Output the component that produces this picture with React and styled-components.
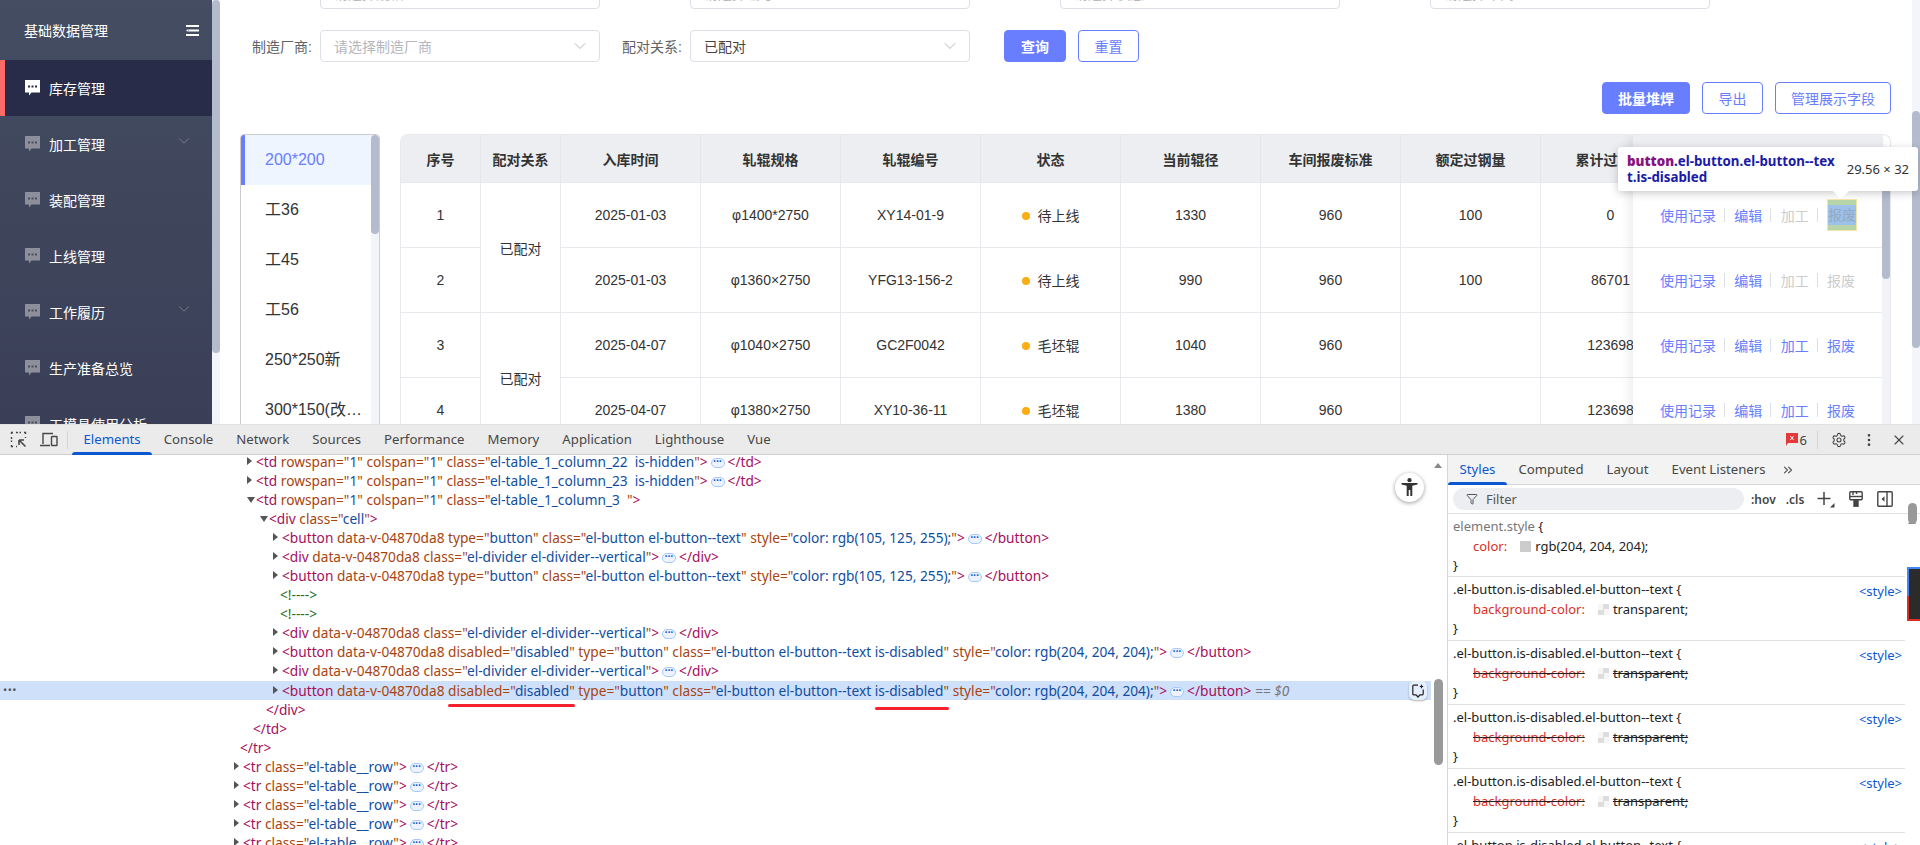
import React from 'react'
import styled, { createGlobalStyle } from 'styled-components'
import { ChevronDown, ChevronsRight, Filter as FilterIcon, MoreVertical, Settings, X } from 'lucide-react'

const APP_FONT = `"Liberation Sans", "Noto Sans CJK SC", sans-serif`
const TOOL_FONT = `"Noto Sans", "Noto Sans CJK SC", sans-serif`
const BRAND = '#697dff'

const GlobalStyle = createGlobalStyle`
  html, body { margin: 0; padding: 0; height: 100%; overflow: hidden; background: #fff; }
  * { box-sizing: border-box; }
`

const Page = styled.div`
  width: 1920px;
  height: 845px;
  display: flex;
  flex-direction: column;
  overflow: hidden;
`

const Viewport = styled.div`
  position: relative;
  height: 424px;
  display: flex;
  overflow: hidden;
  font-family: ${APP_FONT};
`

/* ---------- sidebar ---------- */
const Sidebar = styled.aside`
  width: 212px;
  flex: none;
  height: 424px;
  color: #fff;
  font-size: 14px;
  background: linear-gradient(#444d61, #3a3f57);
`

const SideHead = styled.div`
  height: 60px;
  padding: 0 13px 0 24px;
  display: flex;
  align-items: center;
  justify-content: space-between;
`

const SideItem = styled.div`
  height: 56px;
  display: flex;
  align-items: center;
  gap: 9px;
  padding-left: ${(p) => (p.$active ? '20px' : '25px')};
  padding-right: 19px;
  border-left: ${(p) => (p.$active ? '5px solid #fb6a66' : 'none')};
  background: ${(p) => (p.$active ? '#282c48' : 'transparent')};
  & > span { flex: 1; }
  & > .arrow { color: #868b9b; margin-top: -6px; }
`

const Rail = styled.div`
  width: ${(p) => p.$w || 8}px;
  flex: none;
  background: #f3f5fa;
  position: relative;
`

const RailThumb = styled.div`
  height: ${(p) => p.$h}px;
  margin-top: ${(p) => p.$top || 0}px;
  background: #b4bbcd;
  border-radius: 4px;
`

/* ---------- main ---------- */
const Main = styled.main`
  flex: 1;
  min-width: 0;
  background: #fff;
  padding: 0 21px 0 20px;
`

const FilterForm = styled.div`
  display: grid;
  grid-template-columns: repeat(4, 370px);
  row-gap: 21px;
  margin: -23px 0 0 -20px;
`

const FormItem = styled.div`
  display: flex;
  align-items: center;
  height: 32px;
  font-size: 14px;
  color: #606266;
`

const FormLabel = styled.label`
  width: 100px;
  flex: none;
  padding-right: 8px;
  text-align: right;
`

const SelectBox = styled.div`
  width: 280px;
  height: 32px;
  flex: none;
  display: flex;
  align-items: center;
  justify-content: space-between;
  padding: 0 9px 0 13px;
  border: 1px solid #dcdfe6;
  border-radius: 4px;
  background: #fff;
  color: ${(p) => (p.$placeholder ? '#b4b7bd' : '#444')};
  & svg { color: #a8abb2; margin-top: -1px; }
`

const Btn = styled.button`
  height: 32px;
  padding: 0;
  width: ${(p) => p.$w}px;
  flex: none;
  font: 14px ${APP_FONT};
  border-radius: 4px;
  border: 1px solid ${BRAND};
  background: ${(p) => (p.$primary ? BRAND : '#fff')};
  color: ${(p) => (p.$primary ? '#fff' : BRAND)};
  font-weight: ${(p) => (p.$primary ? 700 : 400)};
`

const FormActions = styled.div`
  display: flex;
  gap: 12px;
  padding-left: 44px;
`

const Toolbar = styled.div`
  display: flex;
  justify-content: flex-end;
  gap: 12px;
  margin-top: 20px;
`

const Workspace = styled.div`
  display: flex;
  gap: 20px;
  margin-top: 20px;
`

const SpecList = styled.div`
  width: 140px;
  height: 320px;
  flex: none;
  display: flex;
  border: 1px solid #ccc;
  border-radius: 4px 4px 0 0;
  overflow: hidden;
`

const SpecItems = styled.div`
  flex: 1;
  min-width: 0;
`

const SpecItem = styled.div`
  height: 50px;
  line-height: 50px;
  padding-left: ${(p) => (p.$active ? '20px' : '24px')};
  padding-right: 6px;
  font-size: 16px;
  color: ${(p) => (p.$active ? BRAND : '#333')};
  background: ${(p) => (p.$active ? '#eef5ff' : '#fff')};
  border-left: ${(p) => (p.$active ? `4px solid ${BRAND}` : 'none')};
  white-space: nowrap;
  overflow: hidden;
  text-overflow: ellipsis;
`

const TableWrap = styled.div`
  position: relative;
  flex: 1;
  min-width: 0;
  height: 320px;
  border: 1px solid #e8e9ed;
  border-bottom: none;
  border-radius: 8px 8px 0 0;
  overflow: hidden;
`

const Table = styled.table`
  width: 1280px;
  table-layout: fixed;
  border-collapse: separate;
  border-spacing: 0;
  font-size: 14px;
  color: #333;
  text-align: center;
`

const Th = styled.th`
  height: 48px;
  padding: 0;
  background: #eceef2;
  font-weight: 700;
  border-right: 1px solid #e4e6ea;
  border-bottom: 1px solid #e8e9ed;
`

const Td = styled.td`
  height: 65px;
  padding: 0;
  border-right: 1px solid #e8e9ed;
  border-bottom: 1px solid #e8e9ed;
`

const StatusDot = styled.i`
  display: inline-block;
  width: 8px;
  height: 8px;
  margin-right: 8px;
  border-radius: 50%;
  background: #faad14;
  vertical-align: 1px;
`

const FixedColumn = styled.div`
  position: absolute;
  top: 0;
  left: 1232px;
  width: 250px;
  background: #fff;
  box-shadow: -4px 0 10px rgba(0, 0, 0, 0.07);
`

const FixedHead = styled.div`
  height: 48px;
  background: #eceef2;
  border-bottom: 1px solid #e8e9ed;
`

const ActionRow = styled.div`
  height: 65px;
  display: flex;
  align-items: center;
  padding-left: 27px;
  border-bottom: 1px solid #e8e9ed;
`

const ActionBtn = styled.button`
  padding: 0;
  border: none;
  background: none;
  font: 14px ${APP_FONT};
  white-space: nowrap;
  color: ${(p) => (p.$off ? '#ccc' : BRAND)};
`

const InspectedBtn = styled.button`
  width: 29.56px;
  height: 32px;
  padding: 0;
  border: 1px solid #f5e6a8;
  background: #b7d5a8;
  display: flex;
  align-items: center;
  font: 14px ${APP_FONT};
  color: #93a9c4;
  white-space: nowrap;
  & > span { display: block; width: 100%; line-height: 20px; background: #9dc1e8; text-align: center; }
`

const ActionDivider = styled.i`
  width: 1px;
  height: 14px;
  flex: none;
  margin: 0 9.33px 0 8px;
  background: #dcdfe6;
`

const TableRail = styled.div`
  position: absolute;
  top: 48px;
  right: 0;
  width: 8px;
  height: 272px;
  background: #f1f3f9;
`

const InspectTip = styled.div`
  position: absolute;
  top: 147px;
  left: 1618px;
  width: 300px;
  height: 44px;
  padding: 0 9px;
  display: flex;
  align-items: center;
  justify-content: space-between;
  background: #fff;
  border-radius: 3px;
  box-shadow: 0 2px 8px rgba(0, 0, 0, 0.22);
  font: 13.3px/16px ${TOOL_FONT};
  z-index: 5;
  &::after {
    content: '';
    position: absolute;
    left: 215px;
    top: 44px;
    border: 8px solid transparent;
    border-top-color: #fff;
    border-bottom: none;
  }
`

const TipSelector = styled.div`
  width: 210px;
  flex: none;
  word-break: break-all;
  font-weight: 700;
  color: #1a1aa6;
  & > b { color: #881280; }
`

const TipSize = styled.span`
  color: #333;
  font-size: 13px;
  white-space: nowrap;
`

/* ---------- devtools ---------- */
const Devtools = styled.section`
  flex: 1;
  min-height: 0;
  display: flex;
  flex-direction: column;
  font-family: ${TOOL_FONT};
`

const DevBar = styled.div`
  height: 31px;
  flex: none;
  display: flex;
  align-items: center;
  background: #ebebeb;
  border-top: 1px solid #e0e0e0;
  border-bottom: 1px solid #d0d0d0;
  color: #444;
`

const DevIcons = styled.div`
  width: 68px;
  height: 18px;
  display: flex;
  align-items: center;
  gap: 13px;
  padding-left: 10px;
  border-right: 1px solid #d4d4d4;
  margin-right: 4px;
`

const DevTab = styled.div`
  height: 30px;
  line-height: 29px;
  padding: 0 11.5px;
  font-size: 13.2px;
  position: relative;
  color: ${(p) => (p.$active ? '#0b57d0' : '#474747')};
  ${(p) => p.$active && `
    &::after {
      content: '';
      position: absolute;
      left: 0; right: 0; bottom: 0;
      height: 3px;
      border-radius: 3px 3px 0 0;
      background: #0b57d0;
    }
  `}
`

const DevBarRight = styled.div`
  margin-left: auto;
  display: flex;
  align-items: center;
  color: #444;
`

const ErrorCount = styled.span`
  display: flex;
  align-items: center;
  gap: 2px;
  font-size: 13px;
  padding-right: 10px;
  margin-right: 13px;
  border-right: 1px solid #d4d4d4;
`

const DevBody = styled.div`
  flex: 1;
  min-height: 0;
  display: flex;
`

const DomPanel = styled.div`
  position: relative;
  width: 1434px;
  flex: none;
  overflow: hidden;
`

const DomList = styled.div`
  margin-top: -3px;
  font-size: 13.7px;
  line-height: 19px;
  white-space: pre;
`

const DomRow = styled.div`
  position: relative;
  height: 19px;
  padding-left: ${(p) => p.$x}px;
  ${(p) => p.$selected && `
    margin-top: 1px;
    background: #cfe0fb;
    width: 1431px;
  `}
`

const Twisty = styled.i`
  position: absolute;
  left: ${(p) => p.$x - 9}px;
  top: 5px;
  width: 0;
  height: 0;
  ${(p) => (p.$open
    ? 'margin-top: 2px; border-left: 4px solid transparent; border-right: 4px solid transparent; border-top: 6px solid #555;'
    : 'border-top: 4px solid transparent; border-bottom: 4px solid transparent; border-left: 5px solid #555;')}
`

const TagText = styled.span` color: #a50e5c; `
const AttrName = styled.span` color: #a8440f; `
const AttrValue = styled.span` color: #104ea0; `
const CommentText = styled.span` color: #236e25; `

const Marked = styled.span`
  position: relative;
  &::after {
    content: '';
    position: absolute;
    left: 0;
    right: 0;
    bottom: ${(p) => p.$drop}px;
    height: 3px;
    border-radius: 2px;
    background: #f5222d;
  }
`

const Dots = styled.span`
  display: inline-block;
  width: 14px;
  height: 10px;
  margin: 0 3px;
  border: 1px solid #a8c7fa;
  border-radius: 5px;
  background: #edf3fe;
  color: #0b57d0;
  font-size: 7px;
  line-height: 6px;
  text-align: center;
  letter-spacing: 0.2px;
  vertical-align: -1px;
  overflow: hidden;
`

const RowMenu = styled.span`
  position: absolute;
  left: 3px;
  top: -1px;
  color: #555;
  font-size: 11px;
  letter-spacing: 0.5px;
`

const AskBtn = styled.span`
  position: absolute;
  left: 1409px;
  top: 0;
  width: 18px;
  height: 19px;
  display: flex;
  align-items: center;
  justify-content: center;
  border-radius: 5px;
  background: #e6effd;
  box-shadow: 0 1px 2px rgba(0, 0, 0, 0.3);
`

const A11yBtn = styled.div`
  position: absolute;
  left: 1395px;
  top: 18px;
  width: 29px;
  height: 29px;
  display: flex;
  align-items: center;
  justify-content: center;
  border-radius: 50%;
  background: #fff;
  box-shadow: 0 1px 4px rgba(0, 0, 0, 0.4);
`

const SideRail = styled.div`
  width: ${(p) => p.$w}px;
  flex: none;
  background: #fff;
  position: relative;
`

const ScrollUp = styled.i`
  position: absolute;
  left: ${(p) => p.$x}px;
  top: ${(p) => p.$y}px;
  border-left: 4px solid transparent;
  border-right: 4px solid transparent;
  border-bottom: 5px solid #888;
`

const RailGrip = styled.i`
  position: absolute;
  left: ${(p) => p.$x}px;
  top: ${(p) => p.$y}px;
  width: 9px;
  height: ${(p) => p.$h}px;
  border-radius: 5px;
  background: #999;
`

const StylesPanel = styled.div`
  flex: 1;
  min-width: 0;
  display: flex;
  flex-direction: column;
  border-left: 1px solid #d6d6d6;
`

const StyleTabs = styled.div`
  height: 30px;
  flex: none;
  display: flex;
  align-items: center;
  background: #f3f3f3;
  border-bottom: 1px solid #d8d8d8;
  & > svg { margin-left: 4px; color: #555; }
`

const FilterRow = styled.div`
  height: 29px;
  flex: none;
  display: flex;
  align-items: center;
  padding-left: 5px;
  border-bottom: 1px solid #e0e0e0;
  font-size: 13px;
  color: #444;
`

const FilterPill = styled.div`
  width: 291px;
  height: 22px;
  display: flex;
  align-items: center;
  gap: 8px;
  padding-left: 13px;
  border-radius: 11px;
  background: #eceef1;
  color: #555;
`

const FilterTool = styled.span`
  display: flex;
  align-items: center;
  margin-left: ${(p) => p.$gap}px;
  color: #444;
  font-weight: ${(p) => (p.$bold ? 600 : 400)};
  font-size: 12px;
`

const StylesSplit = styled.div`
  flex: 1;
  min-height: 0;
  display: flex;
`

const RuleList = styled.div`
  flex: 1;
  min-width: 0;
  overflow: hidden;
`

const Rule = styled.div`
  position: relative;
  height: 64px;
  padding: 3px 5px 0;
  border-bottom: 1px solid #e0e0e0;
  font-size: 13px;
  line-height: 19.5px;
  color: #222;
  &:first-child { height: 63px; }
`

const RuleLine = styled.div`
  padding-left: ${(p) => (p.$decl ? '20px' : 0)};
  color: ${(p) => (p.$muted ? '#777' : 'inherit')};
  white-space: nowrap;
  & > b { font-weight: 400; color: #222; }
`

const PropName = styled.span`
  color: #d93025;
  text-decoration: ${(p) => (p.$struck ? 'line-through' : 'none')};
  text-decoration-color: #222;
`

const Struck = styled.span`
  text-decoration: ${(p) => (p.$struck ? 'line-through' : 'none')};
`

const Swatch = styled.i`
  display: inline-block;
  width: 11px;
  height: 11px;
  margin: 0 4px 0 13px;
  vertical-align: -1px;
  background: ${(p) => (p.$solid ? '#ccc' : 'repeating-conic-gradient(#ddd 0 25%, #f6f6f6 0 50%) 0 0 / 11px 11px')};
`

const SourceLink = styled.span`
  position: absolute;
  right: 3px;
  top: 5px;
  color: #0b57d0;
`

const Minimap = styled.div`
  position: absolute;
  left: 2px;
  top: 53px;
  width: 13px;
  height: 54px;
  background: #2b2b2b;
  border: 2px solid #d93025;
  border-right: none;
  border-top: none;
  &::before {
    content: '';
    position: absolute;
    left: -2px;
    top: 0;
    width: 15px;
    height: 27px;
    border: 2px solid #4285f4;
    border-right: none;
    border-bottom: none;
  }
`

const ChatIcon = ({ active }) => (
  <svg width="15" height="16" viewBox="0 0 15 16">
    <path d="M0 0h15v12.5H6.5L4 15.5v-3H0z" fill={active ? '#fff' : '#8d909b'} />
    <g fill={active ? '#282c48' : '#4a4d60'}>
      <rect x="3" y="5.5" width="2" height="2" />
      <rect x="6.5" y="5.5" width="2" height="2" />
      <rect x="10" y="5.5" width="2" height="2" />
    </g>
  </svg>
)

const MenuIcon = () => (
  <svg width="13" height="11" viewBox="0 0 13 11" fill="#fff">
    <rect width="13" height="2" />
    <rect x="3" y="4.5" width="10" height="2" />
    <path d="M0 5.5l2.5-1.6v3.2z" />
    <rect y="9" width="13" height="2" />
  </svg>
)

const InspectIcon = () => (
  <svg width="17" height="17" viewBox="0 0 17 17" fill="none" stroke="#474747">
    <path d="M6 1.5h5M1.5 6v5M6 15.5h1M15.5 6v1" strokeDasharray="2 1.5" strokeWidth="1.4" />
    <path d="M1.5 3V1.5H3M14 1.5h1.5V3M1.5 14v1.5H3" strokeWidth="1.4" />
    <path d="M9 9l6.5 6.5M9 9h5M9 9v5" strokeWidth="1.6" />
  </svg>
)

const DeviceIcon = () => (
  <svg width="18" height="15" viewBox="0 0 18 15" fill="none" stroke="#474747" strokeWidth="1.4">
    <path d="M3 12V1.5h10M0 13.5h10" />
    <rect x="11.5" y="4.5" width="5.5" height="9" rx="0.6" />
  </svg>
)

const ErrorFlag = () => (
  <svg width="12" height="13" viewBox="0 0 12 13">
    <path d="M0 0h12v10H2l-2 3z" fill="#e5383b" />
    <path d="M4.3 3l3.4 4M7.7 3L4.3 7" stroke="#fff" strokeWidth="1" />
  </svg>
)

const A11yIcon = () => (
  <svg width="17" height="19" viewBox="0 0 17 19" fill="#333">
    <circle cx="8.5" cy="2.2" r="2.1" />
    <path d="M0.5 5h16v1.6l-5.2 1.2V18H9.3v-6H7.7v6H5.7V7.8L0.5 6.6z" />
  </svg>
)

const AskIcon = () => (
  <svg width="12" height="14" viewBox="0 0 12 14" fill="none" stroke="#222" strokeWidth="1.2">
    <path d="M6 1.2H1.6a.8.8 0 0 0-.8.8v8a.8.8 0 0 0 .8.8H4L6 13l2-2.2h2.4a.8.8 0 0 0 .8-.8V5.5" />
    <path d="M9.5 0.8v3.4M7.8 2.5h3.4" />
  </svg>
)

const NewRuleIcon = () => (
  <svg width="18" height="17" viewBox="0 0 18 17">
    <path d="M7 1v13M0.5 7.5h13" stroke="#444" strokeWidth="1.5" fill="none" />
    <path d="M17.5 12v4.5H13z" fill="#444" />
  </svg>
)

const BrushIcon = () => (
  <svg width="14" height="16" viewBox="0 0 14 16" fill="none" stroke="#444" strokeWidth="1.4">
    <rect x="0.8" y="0.8" width="12.4" height="8" rx="1" />
    <path d="M0.8 5.5h12.4" />
    <path d="M4 1v3M7.5 1v2" />
    <rect x="5" y="9" width="4" height="6.2" fill="#444" />
  </svg>
)

const SidePaneIcon = () => (
  <svg width="16" height="16" viewBox="0 0 16 16" fill="none" stroke="#444" strokeWidth="1.4">
    <rect x="0.8" y="0.8" width="14.4" height="14.4" rx="1" />
    <path d="M10 1v14" />
    <path d="M7.5 5.2v5.6L4.5 8z" fill="#444" stroke="none" />
  </svg>
)

const MENU = [
  { label: '加工管理', arrow: true },
  { label: '装配管理' },
  { label: '上线管理' },
  { label: '工作履历', arrow: true },
  { label: '生产准备总览' },
  { label: '工模具使用分析' },
]

const SPECS = ['200*200', '工36', '工45', '工56', '250*250新', '300*150(改进型)']

const COLUMNS = [
  ['序号', 80], ['配对关系', 80], ['入库时间', 140], ['轧辊规格', 140], ['轧辊编号', 140],
  ['状态', 140], ['当前辊径', 140], ['车间报废标准', 140], ['额定过钢量', 140], ['累计过钢量', 140],
]

const ROWS = [
  { id: 1, span: 2, date: '2025-01-03', size: 'φ1400*2750', code: 'XY14-01-9', state: '待上线', dia: 1330, rated: 100, total: 0, off: [true, true] },
  { id: 2, date: '2025-01-03', size: 'φ1360×2750', code: 'YFG13-156-2', state: '待上线', dia: 990, rated: 100, total: 86701, off: [true, true] },
  { id: 3, span: 2, date: '2025-04-07', size: 'φ1040×2750', code: 'GC2F0042', state: '毛坯辊', dia: 1040, rated: '', total: 123698, off: [false, false] },
  { id: 4, date: '2025-04-07', size: 'φ1380×2750', code: 'XY10-36-11', state: '毛坯辊', dia: 1380, rated: '', total: 123698, off: [false, false] },
]

const RULES = [1, 2, 3, 4, 5]

const Attr = ({ name, value }) => (
  <>
    {' '}
    <AttrName>{name}</AttrName>
    {value !== undefined && (
      <>
        <AttrName>="</AttrName>
        <AttrValue>{value}</AttrValue>
        <AttrName>"</AttrName>
      </>
    )}
  </>
)

const DomLine = ({ x, open, twisty = true, selected, tag, children, close }) => (
  <DomRow $x={x} $selected={selected}>
    {selected && <RowMenu>•••</RowMenu>}
    {twisty && <Twisty $x={x} $open={open} />}
    <TagText>&lt;{tag}</TagText>
    {children}
    <TagText>&gt;</TagText>
    {close && (
      <>
        <Dots>•••</Dots>
        <TagText>&lt;/{close}&gt;</TagText>
      </>
    )}
    {selected && <i style={{ color: '#777' }}> == $0</i>}
    {selected && <AskBtn><AskIcon /></AskBtn>}
  </DomRow>
)

const EnabledButton = () => (
  <DomLine x={282} tag="button" close="button">
    <Attr name="data-v-04870da8" />
    <Attr name="type" value="button" />
    <Attr name="class" value="el-button el-button--text" />
    <Attr name="style" value="color: rgb(105, 125, 255);" />
  </DomLine>
)

const DividerLine = () => (
  <DomLine x={282} tag="div" close="div">
    <Attr name="data-v-04870da8" />
    <Attr name="class" value="el-divider el-divider--vertical" />
  </DomLine>
)

const DisabledButton = ({ selected }) => (
  <DomLine x={282} tag="button" close="button" selected={selected}>
    <Attr name="data-v-04870da8" />
    {' '}
    {selected ? (
      <Marked $drop={-7}>
        <AttrName>disabled="</AttrName><AttrValue>disabled</AttrValue><AttrName>"</AttrName>
      </Marked>
    ) : (
      <><AttrName>disabled="</AttrName><AttrValue>disabled</AttrValue><AttrName>"</AttrName></>
    )}
    <Attr name="type" value="button" />
    {' '}
    <AttrName>class="</AttrName>
    <AttrValue>el-button el-button--text </AttrValue>
    {selected ? (
      <Marked $drop={-10}>
        <AttrValue>is-disabled</AttrValue><AttrName>"</AttrName>
      </Marked>
    ) : (
      <><AttrValue>is-disabled</AttrValue><AttrName>"</AttrName></>
    )}
    <Attr name="style" value="color: rgb(204, 204, 204);" />
  </DomLine>
)

const CloseLine = ({ x, tag }) => (
  <DomRow $x={x}><TagText>&lt;/{tag}&gt;</TagText></DomRow>
)

const Actions = ({ off }) => (
  <>
    <ActionBtn>使用记录</ActionBtn>
    <ActionDivider />
    <ActionBtn>编辑</ActionBtn>
    <ActionDivider />
    <ActionBtn $off={off[0]}>加工</ActionBtn>
    <ActionDivider />
  </>
)

const App = () => (
  <Page>
    <GlobalStyle />
    <Viewport>
      <Sidebar>
        <SideHead>基础数据管理<MenuIcon /></SideHead>
        <SideItem $active><ChatIcon active /><span>库存管理</span></SideItem>
        {MENU.map((m) => (
          <SideItem key={m.label}>
            <ChatIcon />
            <span>{m.label}</span>
            {m.arrow && <ChevronDown className="arrow" size={18} strokeWidth={1} />}
          </SideItem>
        ))}
      </Sidebar>
      <Rail><RailThumb $h={353} /></Rail>
      <Main>
        <FilterForm>
          {['请选择规格', '请选择编号', '请选择状态', '请选择车间'].map((text) => (
            <FormItem key={text}>
              <FormLabel />
              <SelectBox $placeholder>{text}<ChevronDown size={20} strokeWidth={1} /></SelectBox>
            </FormItem>
          ))}
          <FormItem>
            <FormLabel>制造厂商:</FormLabel>
            <SelectBox $placeholder>请选择制造厂商<ChevronDown size={20} strokeWidth={1} /></SelectBox>
          </FormItem>
          <FormItem>
            <FormLabel>配对关系:</FormLabel>
            <SelectBox>已配对<ChevronDown size={20} strokeWidth={1} /></SelectBox>
          </FormItem>
          <FormActions>
            <Btn $primary $w={62}>查询</Btn>
            <Btn $w={61}>重置</Btn>
          </FormActions>
        </FilterForm>
        <Toolbar>
          <Btn $primary $w={88}>批量堆焊</Btn>
          <Btn $w={61}>导出</Btn>
          <Btn $w={116}>管理展示字段</Btn>
        </Toolbar>
        <Workspace>
          <SpecList>
            <SpecItems>
              {SPECS.map((s, i) => <SpecItem key={s} $active={i === 0}>{s}</SpecItem>)}
            </SpecItems>
            <Rail><RailThumb $h={99} /></Rail>
          </SpecList>
          <TableWrap>
            <Table>
              <colgroup>
                {COLUMNS.map(([name, w]) => <col key={name} width={w} />)}
              </colgroup>
              <thead>
                <tr>{COLUMNS.map(([name]) => <Th key={name}>{name}</Th>)}</tr>
              </thead>
              <tbody>
                {ROWS.map((r) => (
                  <tr key={r.id}>
                    <Td>{r.id}</Td>
                    {r.span && <Td rowSpan={r.span}>已配对</Td>}
                    <Td>{r.date}</Td>
                    <Td>{r.size}</Td>
                    <Td>{r.code}</Td>
                    <Td><StatusDot />{r.state}</Td>
                    <Td>{r.dia}</Td>
                    <Td>960</Td>
                    <Td>{r.rated}</Td>
                    <Td>{r.total}</Td>
                  </tr>
                ))}
              </tbody>
            </Table>
            <FixedColumn>
              <FixedHead />
              {ROWS.map((r) => (
                <ActionRow key={r.id}>
                  <Actions off={r.off} />
                  {r.id === 1
                    ? <InspectedBtn disabled><span>报废</span></InspectedBtn>
                    : <ActionBtn $off={r.off[1]}>报废</ActionBtn>}
                </ActionRow>
              ))}
            </FixedColumn>
            <TableRail><RailThumb $h={96} /></TableRail>
          </TableWrap>
        </Workspace>
      </Main>
      <Rail><RailThumb $top={111} $h={237} /></Rail>
      <InspectTip>
        <TipSelector><b>button</b>.el-button.el-button--text.is-disabled</TipSelector>
        <TipSize>29.56 × 32</TipSize>
      </InspectTip>
    </Viewport>
    <Devtools>
      <DevBar>
        <DevIcons><InspectIcon /><DeviceIcon /></DevIcons>
        <DevTab $active>Elements</DevTab>
        {['Console', 'Network', 'Sources', 'Performance', 'Memory', 'Application', 'Lighthouse', 'Vue'].map((t) => (
          <DevTab key={t}>{t}</DevTab>
        ))}
        <DevBarRight>
          <ErrorCount><ErrorFlag />6</ErrorCount>
          <Settings size={16} strokeWidth={1.6} />
          <MoreVertical size={16} strokeWidth={2} style={{ marginLeft: 14 }} />
          <X size={16} strokeWidth={1.6} style={{ marginLeft: 14, marginRight: 13 }} />
        </DevBarRight>
      </DevBar>
      <DevBody>
        <DomPanel>
          <DomList>
            <DomLine x={256} tag="td" close="td">
              <Attr name="rowspan" value="1" /><Attr name="colspan" value="1" />
              <Attr name="class" value="el-table_1_column_22  is-hidden" />
            </DomLine>
            <DomLine x={256} tag="td" close="td">
              <Attr name="rowspan" value="1" /><Attr name="colspan" value="1" />
              <Attr name="class" value="el-table_1_column_23  is-hidden" />
            </DomLine>
            <DomLine x={256} open tag="td">
              <Attr name="rowspan" value="1" /><Attr name="colspan" value="1" />
              <Attr name="class" value="el-table_1_column_3  " />
            </DomLine>
            <DomLine x={269} open tag="div"><Attr name="class" value="cell" /></DomLine>
            <EnabledButton />
            <DividerLine />
            <EnabledButton />
            <DomRow $x={280}><CommentText>&lt;!----&gt;</CommentText></DomRow>
            <DomRow $x={280}><CommentText>&lt;!----&gt;</CommentText></DomRow>
            <DividerLine />
            <DisabledButton />
            <DividerLine />
            <DisabledButton selected />
            <CloseLine x={266} tag="div" />
            <CloseLine x={253} tag="td" />
            <CloseLine x={240} tag="tr" />
            {[1, 2, 3, 4, 5].map((n) => (
              <DomLine key={n} x={243} tag="tr" close="tr">
                <Attr name="class" value="el-table__row" />
              </DomLine>
            ))}
          </DomList>
          <A11yBtn><A11yIcon /></A11yBtn>
        </DomPanel>
        <SideRail $w={13}>
          <ScrollUp $x={0} $y={8} />
          <RailGrip $x={0} $y={224} $h={86} />
        </SideRail>
        <StylesPanel>
          <StyleTabs>
            <DevTab $active>Styles</DevTab>
            <DevTab>Computed</DevTab>
            <DevTab>Layout</DevTab>
            <DevTab>Event Listeners</DevTab>
            <ChevronsRight size={14} />
          </StyleTabs>
          <FilterRow>
            <FilterPill><FilterIcon size={12} />Filter</FilterPill>
            <FilterTool $gap={7} $bold>:hov</FilterTool>
            <FilterTool $gap={10} $bold>.cls</FilterTool>
            <FilterTool $gap={13}><NewRuleIcon /></FilterTool>
            <FilterTool $gap={14}><BrushIcon /></FilterTool>
            <FilterTool $gap={14}><SidePaneIcon /></FilterTool>
          </FilterRow>
          <StylesSplit>
            <RuleList>
              <Rule>
                <RuleLine $muted>element.style <b>{'{'}</b></RuleLine>
                <RuleLine $decl><PropName>color:</PropName><Swatch $solid />rgb(204, 204, 204);</RuleLine>
                <RuleLine>{'}'}</RuleLine>
              </Rule>
              {RULES.map((n) => (
                <Rule key={n}>
                  <RuleLine>.el-button.is-disabled.el-button--text {'{'}</RuleLine>
                  <RuleLine $decl>
                    <PropName $struck={n > 1}>background-color:</PropName>
                    <Swatch />
                    <Struck $struck={n > 1}>transparent;</Struck>
                  </RuleLine>
                  <RuleLine>{'}'}</RuleLine>
                  <SourceLink>&lt;style&gt;</SourceLink>
                </Rule>
              ))}
            </RuleList>
            <SideRail $w={15}>
              <ScrollUp $x={3} $y={5} />
              <RailGrip $x={3} $y={-11} $h={21} />
              <Minimap />
            </SideRail>
          </StylesSplit>
        </StylesPanel>
      </DevBody>
    </Devtools>
  </Page>
)

export default App
